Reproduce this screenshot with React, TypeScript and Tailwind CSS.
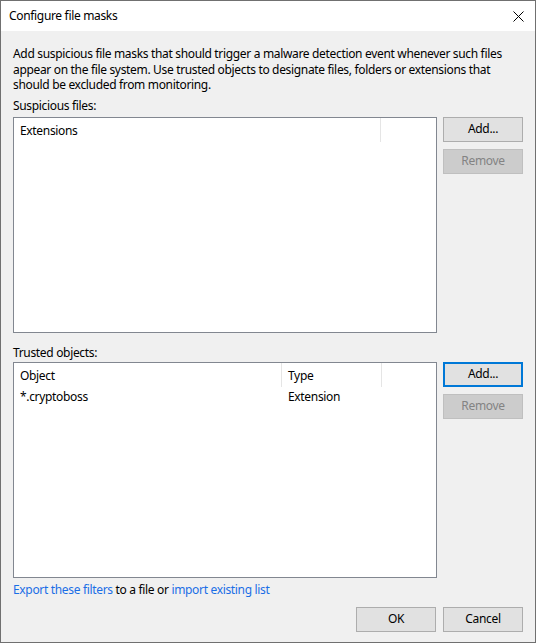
import React from 'react';

// Configure file masks dialog (Windows 10 style)

const font = "font-['Segoe_UI','Noto_Sans',sans-serif] text-[12px] tracking-[-0.33px]";

const Button: React.FC<{ label: string; disabled?: boolean; focused?: boolean }> = ({
  label,
  disabled,
  focused,
}) => {
  let cls = 'border-[#adadad] bg-[#e1e1e1] text-black';
  if (disabled) cls = 'border-[#bfbfbf] bg-[#cccccc] text-[#838383]';
  if (focused) cls = 'border-2 border-[#0078d7] bg-[#e1e1e1] text-black';
  return (
    <button
      type="button"
      className={`flex h-[25px] w-[80px] items-center justify-center border leading-none ${cls}`}
    >
      {label}
    </button>
  );
};

interface Column {
  title: string;
  width: string;
}

const ListView: React.FC<{ columns: Column[]; rows: string[][] }> = ({ columns, rows }) => (
  <div className="h-[216px] flex-1 border border-[#828790] bg-white">
    <div className="flex h-[24px]">
      {columns.map((c) => (
        <div
          key={c.title}
          className={`flex items-center border-r border-[#e5e5e5] pt-[2px] pl-[6px] ${c.width}`}
        >
          {c.title}
        </div>
      ))}
    </div>
    {rows.map((r, i) => (
      <div key={i} className="flex h-[21px]">
        {r.map((cell, j) => (
          <div key={j} className={`flex items-center pl-[6px] ${columns[j].width}`}>
            {cell}
          </div>
        ))}
      </div>
    ))}
  </div>
);

export default function App() {
  return (
    <div
      className={`flex h-[643px] w-[536px] flex-col border border-[#707070] bg-[#f0f0f0] text-black ${font}`}
    >
      {/* Title bar */}
      <div className="flex h-[30px] shrink-0 items-center justify-between bg-white pl-[8px] pr-[11px]">
        <span>Configure file masks</span>
        <svg width="11" height="11" viewBox="0 0 11 11" className="mt-[1px]">
          <path d="M0.5 0.5 L10.5 10.5 M10.5 0.5 L0.5 10.5" stroke="#000" strokeWidth="1" />
        </svg>
      </div>

      {/* Body */}
      <div className="flex flex-1 flex-col px-[12px] pt-[15px] leading-[15.5px]">
        <p>
          Add suspicious file masks that should trigger a malware detection event whenever such files
          appear on the file system. Use trusted objects to designate files, folders or extensions that
          should be excluded from monitoring.
        </p>

        <div className="mt-[5px] h-[15px]">Suspicious files:</div>
        <div className="mt-[4px] flex gap-[6px]">
          <ListView columns={[{ title: 'Extensions', width: 'w-[367px]' }]} rows={[]} />
          <div className="flex flex-col gap-[7px]">
            <Button label="Add..." />
            <Button label="Remove" disabled />
          </div>
        </div>

        <div className="mt-[12px] h-[15px]">Trusted objects:</div>
        <div className="mt-[2px] flex gap-[6px]">
          <ListView
            columns={[
              { title: 'Object', width: 'w-[268px]' },
              { title: 'Type', width: 'w-[100px]' },
            ]}
            rows={[['*.cryptoboss', 'Extension']]}
          />
          <div className="flex flex-col gap-[7px]">
            <Button label="Add..." focused />
            <Button label="Remove" disabled />
          </div>
        </div>

        <div className="mt-[4px] h-[15px]">
          <a className="text-[#1a6ee6]">Export these filters</a> to a file or{' '}
          <a className="text-[#1a6ee6]">import existing list</a>
        </div>

        <div className="mt-[10px] flex justify-end gap-[7px]">
          <Button label="OK" />
          <Button label="Cancel" />
        </div>
      </div>
    </div>
  );
}
